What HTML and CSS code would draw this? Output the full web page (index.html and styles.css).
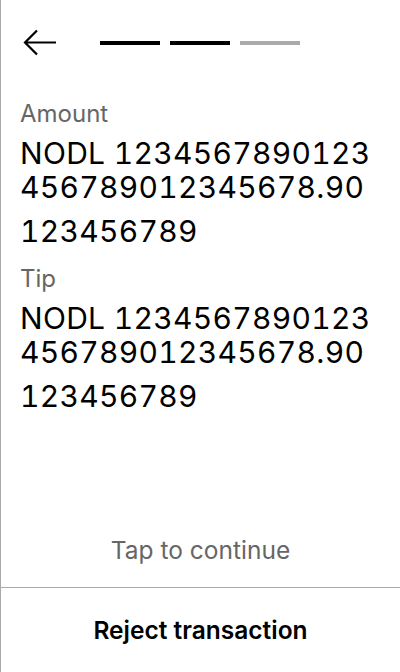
FILE: index.html
```html
<!DOCTYPE html>
<html>
<head>
<meta charset="utf-8">
<link rel="stylesheet" href="styles.css">
</head>
<body>
<div class="screen">
  <div class="header">
    <svg class="back" width="34" height="28" viewBox="0 0 34 28">
      <path d="M33 13.5H3M14 1.5L2 13.5L14 25.5" fill="none" stroke="#000" stroke-width="2.2"/>
    </svg>
    <div class="steps">
      <span class="step done"></span>
      <span class="step done"></span>
      <span class="step"></span>
    </div>
  </div>
  <div class="content">
    <div class="label">Amount</div>
    <div class="value">NODL 1234567890123 456789012345678.90</div>
    <div class="value sub">123456789</div>
    <div class="label tip">Tip</div>
    <div class="value">NODL 1234567890123 456789012345678.90</div>
    <div class="value sub">123456789</div>
  </div>
  <div class="tap">Tap to continue</div>
  <div class="reject">Reject transaction</div>
</div>
</body>
</html>
```

FILE: styles.css
```css
html, body {
  margin: 0;
  padding: 0;
  background: #fff;
}
.screen {
  width: 400px;
  height: 672px;
  box-sizing: border-box;
  border-left: 1px solid #aaa;
  display: flex;
  flex-direction: column;
  font-family: Inter, "Noto Sans", sans-serif;
  color: #000;
}
.header {
  display: flex;
  align-items: center;
  padding: 29px 0 0 22px;
  height: 28px;
}
.back {
  display: block;
}
.steps {
  display: flex;
  gap: 10px;
  margin-left: 43px;
  margin-top: -1px;
}
.step {
  width: 60px;
  height: 4px;
  background: #aaa;
}
.step.done {
  background: #000;
}
.content {
  padding: 43px 19px 0 19px;
  flex: 1;
}
.label {
  font-size: 24px;
  line-height: 28px;
  color: #666;
}
.label.tip {
  margin-top: 17px;
}
.value {
  font-size: 30px;
  line-height: 34px;
  letter-spacing: 0.3px;
  margin-top: 8px;
  width: 362px;
  font-variant-numeric: tabular-nums;
}
.value.sub {
  margin-top: 10px;
}
.tap {
  text-align: center;
  font-size: 24.5px;
  color: #666;
  padding-bottom: 22px;
}
.reject {
  border-top: 1px solid #aaa;
  height: 84px;
  display: flex;
  align-items: center;
  justify-content: center;
  font-size: 24.5px;
  font-weight: 600;
}
```
